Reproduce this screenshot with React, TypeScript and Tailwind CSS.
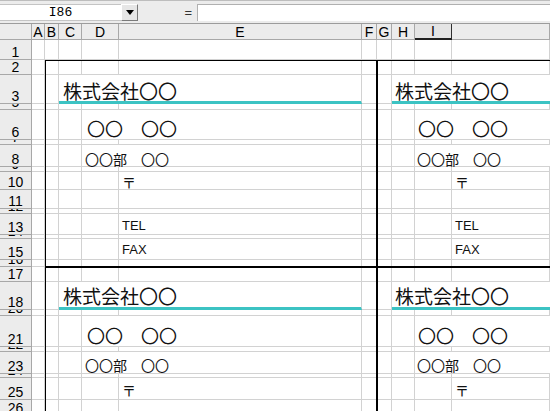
import React from 'react';

const ROW_LABELS = ['1', '2', '3', '5', '6', '7', '8', '9', '10', '11', '12', '13', '14', '15', '16', '17', '18', '20', '21', '22', '23', '24', '25', '26'];
const COL_LABELS = ['A', 'B', 'C', 'D', 'E', 'F', 'G', 'H', 'I', ''];

const jp = "font-['Noto_Sans_CJK_JP',sans-serif]";
const latin = "font-['Liberation_Sans',Arial,sans-serif]";

function Txt({ className, children }: { className: string; children: React.ReactNode }) {
  return <div className={`flex items-end whitespace-nowrap leading-none text-[#111] ${className}`}>{children}</div>;
}

function Cells() {
  const out: React.ReactNode[] = [];
  for (let r = 0; r < 25; r++) {
    for (let c = 0; c < 11; c++) {
      let cls = 'bg-white border-r border-b border-[#d2d2d2]';
      let content: React.ReactNode = null;
      if (r === 0 && c === 0) {
        cls = 'bg-[#ececec] border-r border-b border-[#a8a8a8]';
      } else if (r === 0) {
        cls =
          c === 9
            ? `bg-[#e4e4e4] border-r border-r-[#303030] border-b-2 border-b-[#202020] flex items-center justify-center text-[14px] leading-none text-black ${latin}`
            : `bg-[#ececec] border-r border-b border-[#a8a8a8] flex items-center justify-center text-[14px] leading-none text-black ${latin}`;
        content = COL_LABELS[c - 1];
      } else if (c === 0) {
        cls = `bg-[#ececec] border-r border-b border-[#a8a8a8] flex items-end justify-center overflow-hidden text-[14px] leading-none text-black ${latin}`;
        content = ROW_LABELS[r - 1];
      }
      out.push(
        <div key={`${r}-${c}`} style={{ gridRow: r + 1, gridColumn: c + 1 }} className={cls}>
          {content}
        </div>
      );
    }
  }
  return <>{out}</>;
}

export default function App() {
  return (
    <div className="w-[550px] h-[411px] overflow-hidden bg-white flex flex-col">
      <div className="h-[4px] bg-[#f2f2f2] border-b border-[#bdbdbd] flex">
        <div className="w-[4px] border-r border-[#777]" />
        <div className="w-[336px] border-r border-[#9a9a9a]" />
        <div className="w-[14px] bg-[#555]" />
        <div className="w-[120px] border-r border-[#9a9a9a]" />
        <div className="flex-1" />
      </div>
      <div className="h-[23px] flex bg-[#ececec] border-b border-[#9c9c9c] pt-[3px] pb-[2px]">
        <div className={`w-[121px] bg-white border-t border-b border-[#c4c4c4] flex items-center justify-center text-[13px] text-black font-['Liberation_Mono',monospace]`}>I86</div>
        <div className="w-[17px] bg-[#e6e6e6] border border-t-white border-l-white border-r-[#7a7a7a] border-b-[#7a7a7a] flex items-center justify-center">
          <svg width="8" height="5" viewBox="0 0 8 5"><path d="M0 0h8L4 5z" fill="#000" /></svg>
        </div>
        <div className="w-[59px] flex items-center justify-end pr-[5px] text-[13px] text-[#333] font-['Liberation_Sans',sans-serif]">=</div>
        <div className="flex-1 bg-white border-l border-t border-[#b0b0b0]" />
      </div>

      <div className="grid grid-cols-[32px_13px_14px_23px_37px_243px_15px_15px_23px_37px_1fr] grid-rows-[16px_20px_15px_29px_6px_30px_5px_22px_5px_18px_19px_5px_21px_4px_21px_7px_15px_28px_6px_31px_5px_22px_4px_22px_16px]">
        <Cells />

        {/* card frames */}
        <div className="col-start-3 col-end-8 row-start-3 row-end-17 border border-black" />
        <div className="col-start-8 col-end-12 row-start-3 row-end-17 border-l border-t border-b border-black" />
        <div className="col-start-3 col-end-8 row-start-17 row-end-26 border-l border-t border-r border-black" />
        <div className="col-start-8 col-end-12 row-start-17 row-end-26 border-l border-t border-black" />

        {/* top-left card */}
        <Txt className={`col-start-4 col-end-7 row-start-4 bg-white border-b-[3px] border-b-[#3cc3c3] border-r border-r-[#d2d2d2] pl-[4px] pb-px text-[19px] ${jp}`}>株式会社〇〇</Txt>
        <Txt className={`col-start-5 col-end-7 row-start-6 bg-white border-b border-r border-[#d2d2d2] pl-[5px] pb-[2px] text-[18px] ${jp}`}>〇〇　〇〇</Txt>
        <Txt className={`col-start-5 col-end-7 row-start-8 bg-white border-b border-r border-[#d2d2d2] pl-[3px] text-[14px] ${jp}`}>〇〇部　〇〇</Txt>
        <Txt className={`col-start-6 row-start-10 pl-[3px] pb-px text-[14px] ${jp}`}>〒</Txt>
        <Txt className={`col-start-6 row-start-13 pl-[3px] pb-[3px] text-[13px] ${latin}`}>TEL</Txt>
        <Txt className={`col-start-6 row-start-15 pl-[3px] pb-[4px] text-[13px] ${latin}`}>FAX</Txt>

        {/* top-right card */}
        <Txt className={`col-start-9 col-end-12 row-start-4 bg-white border-b-[3px] border-b-[#3cc3c3] pl-[3px] pb-px text-[19px] ${jp}`}>株式会社〇〇</Txt>
        <Txt className={`col-start-10 col-end-12 row-start-6 bg-white border-b border-[#d2d2d2] pl-[3px] pb-[2px] text-[18px] ${jp}`}>〇〇　〇〇</Txt>
        <Txt className={`col-start-10 col-end-12 row-start-8 bg-white border-b border-[#d2d2d2] pl-[2px] text-[14px] ${jp}`}>〇〇部　〇〇</Txt>
        <Txt className={`col-start-11 row-start-10 pl-[3px] pb-px text-[14px] ${jp}`}>〒</Txt>
        <Txt className={`col-start-11 row-start-13 pl-[3px] pb-[3px] text-[13px] ${latin}`}>TEL</Txt>
        <Txt className={`col-start-11 row-start-15 pl-[3px] pb-[4px] text-[13px] ${latin}`}>FAX</Txt>

        {/* bottom-left card */}
        <Txt className={`col-start-4 col-end-7 row-start-18 bg-white border-b-[3px] border-b-[#3cc3c3] border-r border-r-[#d2d2d2] pl-[4px] pb-[2px] text-[19px] ${jp}`}>株式会社〇〇</Txt>
        <Txt className={`col-start-5 col-end-7 row-start-20 bg-white border-b border-r border-[#d2d2d2] pl-[5px] pb-[2px] text-[18px] ${jp}`}>〇〇　〇〇</Txt>
        <Txt className={`col-start-5 col-end-7 row-start-22 bg-white border-b border-r border-[#d2d2d2] pl-[3px] pb-px text-[14px] ${jp}`}>〇〇部　〇〇</Txt>
        <Txt className={`col-start-6 row-start-24 pl-[3px] pb-[3px] text-[14px] ${jp}`}>〒</Txt>

        {/* bottom-right card */}
        <Txt className={`col-start-9 col-end-12 row-start-18 bg-white border-b-[3px] border-b-[#3cc3c3] pl-[3px] pb-[2px] text-[19px] ${jp}`}>株式会社〇〇</Txt>
        <Txt className={`col-start-10 col-end-12 row-start-20 bg-white border-b border-[#d2d2d2] pl-[3px] pb-[2px] text-[18px] ${jp}`}>〇〇　〇〇</Txt>
        <Txt className={`col-start-10 col-end-12 row-start-22 bg-white border-b border-[#d2d2d2] pl-[2px] pb-px text-[14px] ${jp}`}>〇〇部　〇〇</Txt>
        <Txt className={`col-start-11 row-start-24 pl-[3px] pb-[3px] text-[14px] ${jp}`}>〒</Txt>
      </div>
    </div>
  );
}
